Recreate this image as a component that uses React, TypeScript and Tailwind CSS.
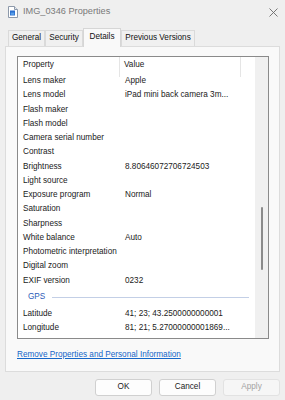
import React from 'react';

const rows: [string, string][] = [
  ['Lens maker', 'Apple'],
  ['Lens model', 'iPad mini back camera 3m...'],
  ['Flash maker', ''],
  ['Flash model', ''],
  ['Camera serial number', ''],
  ['Contrast', ''],
  ['Brightness', '8.80646072706724503'],
  ['Light source', ''],
  ['Exposure program', 'Normal'],
  ['Saturation', ''],
  ['Sharpness', ''],
  ['White balance', 'Auto'],
  ['Photometric interpretation', ''],
  ['Digital zoom', ''],
  ['EXIF version', '0232'],
];

const gps: [string, string][] = [
  ['Latitude', '41; 23; 43.2500000000001'],
  ['Longitude', '81; 21; 5.27000000001869...'],
];

const tabs = [
  { name: 'General', w: 'w-[37px]' },
  { name: 'Security', w: 'w-[38px]' },
  { name: 'Details', w: 'w-[38px]' },
  { name: 'Previous Versions', w: 'w-[74px]' },
];

function FileIcon() {
  return (
    <svg width="10" height="12" viewBox="0 0 10 12">
      <path d="M0.5 0.5 H6.5 L9.5 3.5 V11.5 H0.5 Z" fill="#ffffff" stroke="#8d99aa" />
      <path d="M6.5 0.5 V3.5 H9.5" fill="#e4e9f0" stroke="#8d99aa" />
      <rect x="2" y="4.5" width="5" height="5" fill="#2a6fd0" />
      <rect x="2.8" y="6.6" width="3.4" height="2.2" fill="#5aa0e8" />
    </svg>
  );
}

function Row({ name, value }: { name: string; value: string }) {
  return (
    <div className="flex h-[14.25px] items-center leading-none text-[#1a1a1a]">
      <div className="w-[102px] pl-[5px] whitespace-nowrap">{name}</div>
      <div className="pl-[5px] whitespace-nowrap">{value}</div>
    </div>
  );
}

export default function App() {
  return (
    <div
      className="w-[285px] h-[400px] bg-[#efefef] flex flex-col overflow-hidden text-[8.2px]"
      style={{ fontFamily: '"Liberation Sans", Arial, sans-serif' }}
    >
      {/* title bar */}
      <div className="h-[24px] flex items-center pl-[8px] pr-[7px]">
        <FileIcon />
        <span className="ml-[5px] text-[9.2px] text-[#7a7a7a]">IMG_0346 Properties</span>
        <svg className="ml-auto" width="9" height="9" viewBox="0 0 9 9">
          <path d="M0.5 0.5 L8.5 8.5 M8.5 0.5 L0.5 8.5" stroke="#6a6a6a" strokeWidth="0.9" />
        </svg>
      </div>

      {/* tabs */}
      <div className="mt-[5px] h-[17px] px-[8px] flex items-end">
        {tabs.map((t) => {
          const on = t.name === 'Details';
          return (
            <div
              key={t.name}
              className={
                on
                  ? `${t.w} h-[19px] -mb-px z-10 bg-[#f9f9f9] border border-b-0 border-[#d6d6d6] flex items-center justify-center pb-[2px] text-[#111]`
                  : `${t.w} h-[16px] bg-[#f0f0f0] border border-b-0 border-[#dadada] flex items-center justify-center text-[#111]`
              }
            >
              {t.name}
            </div>
          );
        })}
      </div>

      {/* panel */}
      <div className="mx-[5px] h-[326px] bg-[#f9f9f9] border border-[#dcdcdc] pt-[9px] pl-[11px] flex flex-col">
        <div className="w-[252px] h-[283px] border border-[#8a8a8a] bg-white flex">
          <div className="flex-1 flex flex-col">
            <div className="flex h-[17.2px] items-start text-[#1a1a1a]">
              <div className="w-[101px] pl-[5px] h-full flex items-center">Property</div>
              <div className="w-px h-[20px] bg-[#e5e5e5]" />
              <div className="w-[120px] pl-[4px] h-full flex items-center">Value</div>
              <div className="w-px h-[20px] bg-[#e5e5e5]" />
            </div>
            {rows.map(([n, v]) => (
              <Row key={n} name={n} value={v} />
            ))}
            <div className="h-[19px] flex items-center pl-[10px]">
              <span className="text-[#2b5cb8]">GPS</span>
              <div className="ml-[7px] w-[197px] h-px bg-[#c3cfe6]" />
            </div>
            {gps.map(([n, v]) => (
              <Row key={n} name={n} value={v} />
            ))}
          </div>
          <div className="w-[13px] bg-[#f0f0f0] flex justify-center pt-[150px]">
            <div className="w-[2px] h-[63px] bg-[#8a8a8a] rounded-full" />
          </div>
        </div>
        <div className="mt-[10px] text-[#1566c8] underline">Remove Properties and Personal Information</div>
      </div>

      {/* buttons */}
      <div className="mt-[7px] flex justify-end gap-[7px] pr-[5px]">
        <div className="w-[57px] h-[17px] rounded-[3px] bg-[#fdfdfd] border border-[#d0d0d0] flex items-center justify-center text-[#1a1a1a]">
          OK
        </div>
        <div className="w-[57px] h-[17px] rounded-[3px] bg-[#fdfdfd] border border-[#d0d0d0] flex items-center justify-center text-[#1a1a1a]">
          Cancel
        </div>
        <div className="w-[57px] h-[17px] rounded-[3px] bg-[#f6f6f6] border border-[#e2e2e2] flex items-center justify-center text-[#a3a3a3]">
          Apply
        </div>
      </div>
    </div>
  );
}
